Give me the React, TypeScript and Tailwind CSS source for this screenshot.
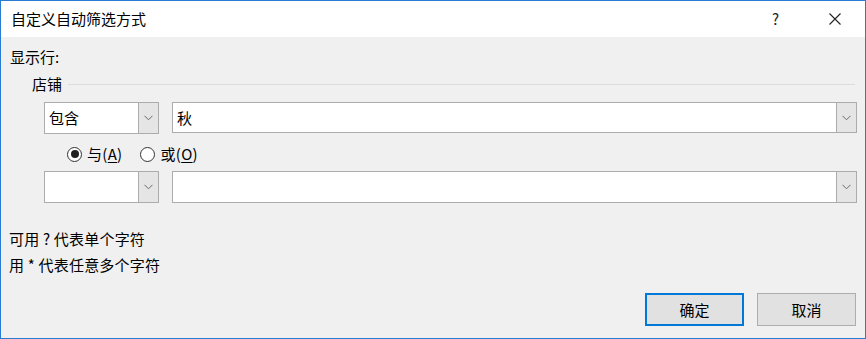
const font = {
  fontFamily: '"Noto Sans CJK SC", "Noto Sans", sans-serif',
};

const Chevron = () => (
  <svg width="9" height="6" viewBox="0 0 9 6" className="block">
    <path d="M0.5 0.8 L4.5 4.8 L8.5 0.8" fill="none" stroke="#6a6a6a" strokeWidth="1" />
  </svg>
);

const Combo = ({ value, className }: { value?: string; className: string }) => (
  <div className={`flex border border-[#acacac] bg-white ${className}`}>
    <div className="flex-1 flex items-center pl-[4px] text-[15px] text-black leading-[18px]">{value}</div>
    <div className="w-[20px] flex items-center justify-center bg-[#e5e5e5] border-l border-[#acacac]">
      <Chevron />
    </div>
  </div>
);

const Radio = ({ checked, label, hot }: { checked?: boolean; label: string; hot: string }) => (
  <div className="flex items-center gap-[5px]">
    <span className="w-[15px] h-[15px] rounded-full border border-[#333] bg-white flex items-center justify-center">
      {checked && <span className="w-[8px] h-[8px] rounded-full bg-[#1f1f1f]" />}
    </span>
    <span className="text-[15px] leading-[18px] text-black tracking-[0.3px]">
      {label}(<span className="underline underline-offset-2">{hot}</span>)
    </span>
  </div>
);

export default function App() {
  return (
    <div style={font} className="w-[866px] h-[339px] border border-[#2a7bd3] flex flex-col overflow-hidden">
      <div className="h-[36px] bg-white flex items-center">
        <span className="ml-[10px] text-[15px] leading-[18px] text-black">自定义自动筛选方式</span>
        <span className="ml-auto mr-[50px] text-[15px] leading-[18px] text-[#222]">?</span>
        <svg width="12" height="12" viewBox="0 0 12 12" className="mr-[24px]">
          <path d="M0.5 0.5 L11.5 11.5 M11.5 0.5 L0.5 11.5" stroke="#222" strokeWidth="1.1" />
        </svg>
      </div>
      <div className="flex-1 bg-[#f0f0f0] flex flex-col text-black">
        <div className="mt-[11px] ml-[9px] text-[15px] leading-[18px]">显示行:</div>
        <div className="mt-[9px] ml-[31px] mr-[10px] flex items-center gap-[6px]">
          <span className="text-[15px] leading-[18px]">店铺</span>
          <div className="flex-1 h-px bg-[#dcdcdc]" />
        </div>
        <div className="mt-[9px] ml-[43px] mr-[8px] flex gap-[13px]">
          <Combo value="包含" className="w-[115px] h-[32px]" />
          <Combo value="秋" className="flex-1 h-[31px]" />
        </div>
        <div className="mt-[11px] ml-[66px] flex items-center gap-[18px] h-[18px]">
          <Radio checked label="与" hot="A" />
          <Radio label="或" hot="O" />
        </div>
        <div className="mt-[8px] ml-[43px] mr-[8px] flex gap-[13px]">
          <Combo className="w-[115px] h-[32px]" />
          <Combo className="flex-1 h-[32px]" />
        </div>
        <div className="mt-[27px] ml-[8px] text-[15px] leading-[18px] tracking-[0.2px]">可用 ? 代表单个字符</div>
        <div className="mt-[8px] ml-[8px] text-[15px] leading-[18px] tracking-[0.2px]">用 * 代表任意多个字符</div>
        <div className="mt-[19px] mr-[9px] flex justify-end gap-[13px]">
          <button className="w-[99px] h-[33px] bg-[#e1e1e1] border-2 border-[#0078d7] text-[15px] leading-[18px]">
            确定
          </button>
          <button className="w-[99px] h-[33px] bg-[#e1e1e1] border border-[#adadad] text-[15px] leading-[18px]">
            取消
          </button>
        </div>
      </div>
    </div>
  );
}
